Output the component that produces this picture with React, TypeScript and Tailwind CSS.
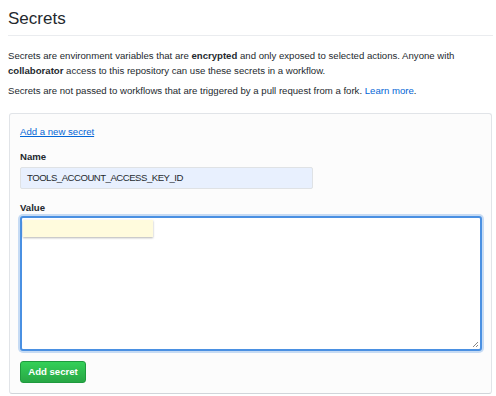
export default function App() {
  const font = { fontFamily: '"Liberation Sans", Arial, sans-serif' };
  return (
    <div className="w-[496px] h-[396px] bg-white text-[#24292e] overflow-hidden" style={font}>
      <div className="ml-[8px] w-[485px]">
        <div className="pt-[7px] pb-[4px] border-b border-[#eaecef]">
          <h1 className="text-[17px] leading-[24px] font-normal">Secrets</h1>
        </div>
        <p className="mt-[12px] text-[9.6px] leading-[15px]">
          Secrets are environment variables that are <b>encrypted</b> and only exposed to selected actions. Anyone with <b>collaborator</b> access to this repository can use these secrets in a workflow.
        </p>
        <p className="mt-[5px] text-[9.6px] leading-[15px]">
          Secrets are not passed to workflows that are triggered by a pull request from a fork. <span className="text-[#0366d6]">Learn more</span>.
        </p>
        <div className="mt-[15px] ml-[1px] w-[483px] h-[281px] border border-[#e1e4e8] border-b-[#d1d5da] rounded-[3px] bg-[#fcfcfc] px-[10px] pt-[10px]">
          <a className="block text-[9.6px] leading-[15px] text-[#0366d6] underline">Add a new secret</a>
          <div className="mt-[10px] text-[9.6px] leading-[15px] font-bold">Name</div>
          <div className="mt-[3px] w-[293px] h-[22px] border border-[#dfe2e5] rounded-[2px] bg-[#e8f0fe] px-[6px] flex items-center text-[9.6px] tracking-[-0.5px]">
            TOOLS_ACCOUNT_ACCESS_KEY_ID
          </div>
          <div className="mt-[11px] text-[9.6px] leading-[15px] font-bold">Value</div>
          <div className="relative mt-[1px] w-[462px] h-[135px] border-[2px] border-[#4a90e2] rounded-[3px] bg-white shadow-[0_0_0_2px_rgba(74,144,226,0.3)]">
            <div className="absolute left-[1px] top-[2px] w-[130px] h-[17px] bg-[#fffbdd] shadow-[0_1px_2px_rgba(0,0,0,0.3)]" />
            <svg className="absolute right-[1px] bottom-[1px]" width="7" height="7" viewBox="0 0 7 7">
              <path d="M6 1L1 6M6 4L4 6" stroke="#888" strokeWidth="1" />
            </svg>
          </div>
          <button className="mt-[10px] w-[66px] h-[22px] rounded-[3px] border border-[#1f9a3e] bg-gradient-to-b from-[#34d058] to-[#28a745] text-white text-[9.6px] font-bold">
            Add secret
          </button>
        </div>
      </div>
    </div>
  );
}
